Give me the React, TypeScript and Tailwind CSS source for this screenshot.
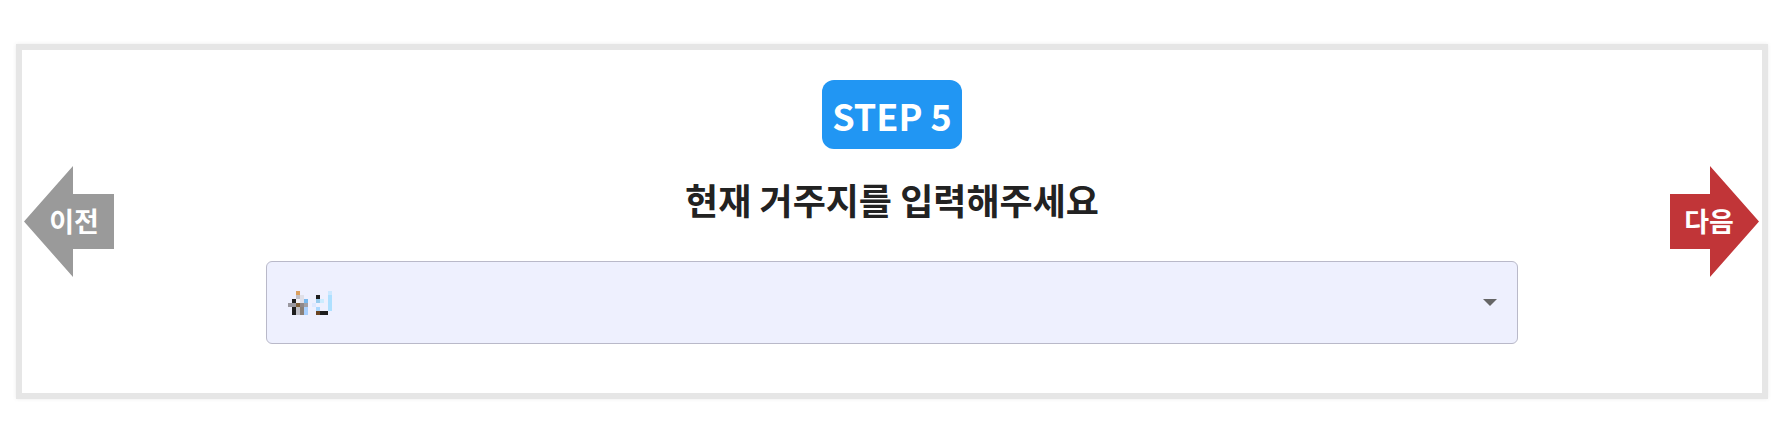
import React from "react";

const PIXELS: [number, number, string][] = [
  [2, 0, "#dba060"], [10, 0, "#cce8ff"],
  [2, 1, "#c0c0c8"], [3, 1, "#e0e0e8"], [7, 1, "#1e1e1e"], [10, 1, "#aee0ff"],
  [1, 2, "#1e1e1e"], [2, 2, "#f4f4fa"], [3, 2, "#e0e0ea"], [4, 2, "#77b8ee"], [7, 2, "#99ccee"], [8, 2, "#ccecff"], [10, 2, "#aee0ff"],
  [0, 3, "#9a98a0"], [1, 3, "#9a98a0"], [2, 3, "#80603a"], [3, 3, "#908888"], [4, 3, "#a0a0a8"], [6, 3, "#dde8ff"], [10, 3, "#aee0ff"],
  [1, 4, "#1e1e1e"], [2, 4, "#c0c0c8"], [3, 4, "#8a8078"], [4, 4, "#a8d0ff"], [7, 4, "#aad8ff"], [10, 4, "#aee0ff"],
  [1, 5, "#1e1e1e"], [2, 5, "#c0c0c8"], [3, 5, "#8a8078"], [4, 5, "#a8d0ff"], [7, 5, "#6a4422"], [8, 5, "#1e1e1e"], [9, 5, "#1e1e1e"],
];

function RegionThumb() {
  return (
    <svg width="48" height="24" viewBox="0 0 48 24" shapeRendering="crispEdges">
      {PIXELS.map(([c, r, fill]) => (
        <rect key={`${c}-${r}`} x={c * 4} y={r * 4} width="4" height="4" fill={fill} />
      ))}
    </svg>
  );
}

export default function App() {
  return (
    <div className="min-h-[433px] bg-white pt-[44px] font-['Noto_Sans_CJK_KR','Noto_Sans',sans-serif]">
      <div className="ml-[16px] w-[1752px] border-[6px] border-[#e6e6e6] bg-white shadow-[0_0_4px_rgba(0,0,0,0.08)]">
        <div className="flex items-center pl-[2px] pr-[3px]">
          {/* prev */}
          <button className="flex h-[111px] w-[90px] shrink-0 items-center justify-center bg-[#9a9a9a] pl-[10px] text-[27px] font-bold text-white [clip-path:polygon(0_50%,49px_0,49px_28px,100%_28px,100%_83px,49px_83px,49px_100%)]">
            이전
          </button>

          <div className="flex flex-1 flex-col items-center pt-[30px] pb-[49px]">
            <div className="flex h-[69px] w-[140px] items-center justify-center rounded-[12px] bg-[#2196f3] text-[36px] font-bold text-white">
              STEP 5
            </div>
            <h2 className="mt-[26px] text-[36px] leading-[48px] font-bold text-[#222]">
              현재 거주지를 입력해주세요
            </h2>
            <div className="mt-[38px] flex h-[83px] w-[1252px] items-center justify-between rounded-[6px] border border-[#b9b9c9] bg-[#eef0fe] pl-[21px] pr-[20px]">
              <RegionThumb />
              <svg width="14" height="7" viewBox="0 0 14 7">
                <polygon points="0,0 14,0 7,7" fill="#666" />
              </svg>
            </div>
          </div>

          {/* next */}
          <button className="flex h-[111px] w-[89px] shrink-0 items-center justify-center bg-[#c13538] pr-[11px] text-[27px] font-bold text-white [clip-path:polygon(0_28px,40px_28px,40px_0,100%_50%,40px_100%,40px_83px,0_83px)]">
            다음
          </button>
        </div>
      </div>
    </div>
  );
}
